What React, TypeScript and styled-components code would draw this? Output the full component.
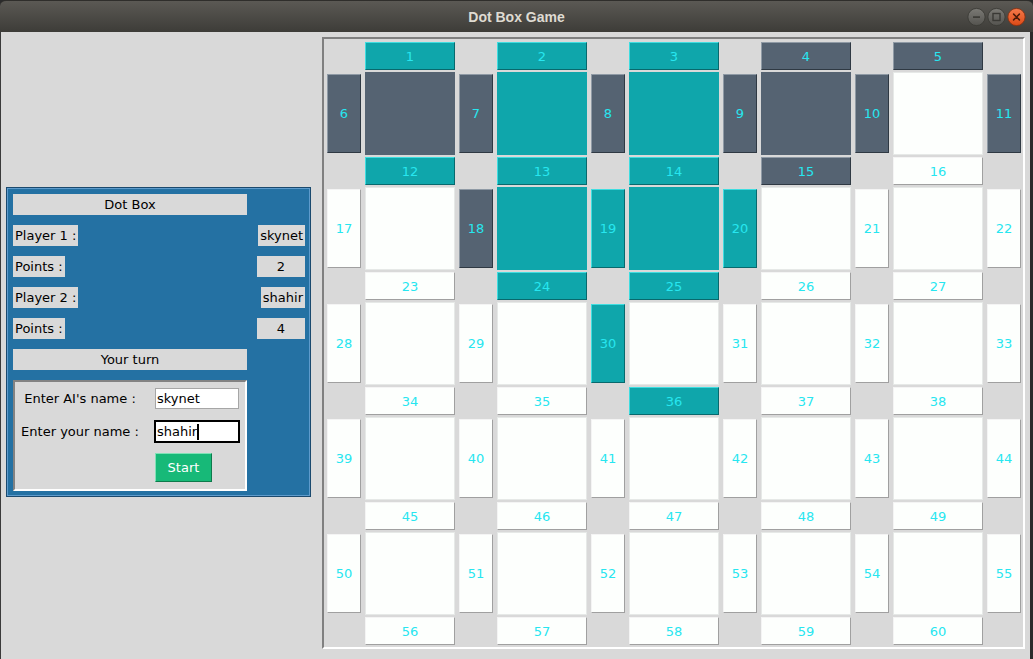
import React from "react";
import styled, { createGlobalStyle } from "styled-components";

type Owner = "n" | "a" | "y";

const colors: Record<Owner, { bg: string; light: string; dark: string; edge: string }> = {
  n: { bg: "#fdfffd", light: "#f4f4f4", dark: "#a0a0a0", edge: "#e6e9e7" },
  a: { bg: "#556372", light: "#8f9aa5", dark: "#2f3943", edge: "#556372" },
  y: { bg: "#0fa6ab", light: "#3fdde0", dark: "#08696d", edge: "#0fa6ab" },
};

// owners of every line and box, row by row
const HLINES = ["yyyaa", "yyyan", "nyynn", "nnynn", "nnnnn", "nnnnn"];
const VLINES = ["aaaaaa", "nayynn", "nnynnn", "nnnnnn", "nnnnnn"];
const BOXES = ["ayyan", "nyynn", "nnnnn", "nnnnn", "nnnnn"];

const Global = createGlobalStyle`
  html, body {
    margin: 0;
    padding: 0;
    background: #2b2b2b;
  }
  body {
    font-family: "DejaVu Sans", "Noto Sans", sans-serif;
    font-size: 13px;
  }
`;

const Window = styled.div`
  width: 1033px;
  height: 659px;
  display: flex;
  flex-direction: column;
  overflow: hidden;
`;

const TitleBar = styled.div`
  height: 32px;
  flex: none;
  display: grid;
  grid-template-columns: 1fr auto 1fr;
  align-items: center;
  border-radius: 6px 6px 0 0;
  border-top: 1px solid #2f2e2b;
  background: linear-gradient(#5b5954, #3d3c38);
  box-sizing: border-box;
  padding-top: 1px;
`;

const Title = styled.div`
  grid-column: 2;
  font-family: "Liberation Sans", Arial, sans-serif;
  font-weight: bold;
  font-size: 14px;
  color: #dfdbd2;
`;

const WinButtons = styled.div`
  grid-column: 3;
  justify-self: end;
  display: flex;
  gap: 1px;
  padding-right: 7px;
`;

const Body = styled.div`
  flex: 1;
  display: flex;
  background: #d9d9d9;
  border-left: 1px solid #3a3a3a;
  border-right: 3px solid #2b2b2b;
`;

const Side = styled.div`
  width: 321px;
  flex: none;
  box-sizing: border-box;
  padding: 155px 0 0 5px;
`;

const Panel = styled.div`
  width: 305px;
  height: 310px;
  box-sizing: border-box;
  background: #2471a3;
  border: 1px solid #1b4a6e;
  box-shadow: inset 0 0 0 1px #5e9bcc;
  padding: 6px 5px 5px 6px;
  display: grid;
  grid-template-columns: 234px 48px;
  grid-template-rows: repeat(6, 21px) 111px;
  column-gap: 10px;
  row-gap: 10px;
`;

const Tag = styled.div<{ $wide?: boolean; $value?: boolean; $fixed?: boolean }>`
  grid-column: ${(p) => (p.$value ? 2 : 1)};
  justify-self: ${(p) => (p.$wide || p.$fixed ? "stretch" : p.$value ? "end" : "start")};
  background: #d9d9d9;
  color: #000;
  height: 21px;
  line-height: 21px;
  padding: 0 2px;
  text-align: center;
  white-space: nowrap;
`;

const NameFrame = styled.div`
  grid-column: 1;
  box-sizing: border-box;
  border: 2px solid;
  border-color: #828282 #ffffff #ffffff #828282;
  background: #d9d9d9;
  padding: 5px 5px 7px 0;
  display: grid;
  grid-template-columns: 130px 86px;
  grid-template-rows: 23px 23px 29px;
  column-gap: 9px;
  row-gap: 10px;
  align-items: center;
`;

const Prompt = styled.div`
  justify-self: center;
  color: #000;
  white-space: nowrap;
`;

const Field = styled.div<{ $focused?: boolean }>`
  height: 23px;
  box-sizing: border-box;
  background: #fff;
  border: 1px solid ${(p) => (p.$focused ? "#000" : "#d9d9d9")};
  box-shadow: inset 0 0 0 1px ${(p) => (p.$focused ? "#000" : "#a6a6a6")};
  padding-left: 2px;
  line-height: 21px;
  color: #000;
  display: flex;
  align-items: center;
`;

const Caret = styled.span`
  display: inline-block;
  width: 2px;
  height: 16px;
  background: #000;
`;

const StartButton = styled.button`
  grid-column: 2;
  justify-self: start;
  margin-left: 1px;
  width: 57px;
  height: 29px;
  padding: 0;
  font-family: inherit;
  font-size: 13px;
  color: #fff;
  background: #17b978;
  border: 1px solid;
  border-color: #80e2b7 #0e7a4c #0e7a4c #80e2b7;
`;

const BoardFrame = styled.div`
  margin-top: 5px;
  align-self: flex-start;
  border: 2px solid;
  border-color: #808080 #ffffff #ffffff #808080;
  padding: 3px 2px 2px 3px;
`;

const Board = styled.div`
  display: grid;
  grid-template-columns: repeat(5, 34px 90px) 34px;
  grid-template-rows: repeat(5, 28px 83px) 28px;
  column-gap: 4px;
  row-gap: 2px;
`;

const Line = styled.button<{ $owner: Owner; $vertical?: boolean }>`
  padding: 0;
  margin: 0;
  font-family: inherit;
  font-size: 13px;
  color: #27e6f0;
  background: ${(p) => colors[p.$owner].bg};
  border: 1px solid;
  border-color: ${(p) => {
    const c = colors[p.$owner];
    return `${c.light} ${c.dark} ${c.dark} ${c.light}`;
  }};
  height: ${(p) => (p.$vertical ? "79px" : "28px")};
  align-self: center;
`;

const Box = styled.div<{ $owner: Owner }>`
  box-sizing: border-box;
  background: ${(p) => colors[p.$owner].bg};
  border: 1px solid ${(p) => colors[p.$owner].edge};
`;

const Dot = styled.div``;

function WinButton({ kind }: { kind: "min" | "max" | "close" }) {
  const close = kind === "close";
  return (
    <svg width="19" height="20" viewBox="0 0 19 20">
      <defs>
        <linearGradient id={`g-${kind}`} x1="0" y1="0" x2="0" y2="1">
          <stop offset="0" stopColor={close ? "#f57a4b" : "#7b7a75"} />
          <stop offset="1" stopColor={close ? "#dc4a16" : "#54534f"} />
        </linearGradient>
      </defs>
      <circle cx="9.5" cy="10" r="8.6" fill={`url(#g-${kind})`} stroke={close ? "#8f2e0c" : "#393834"} strokeWidth="0.8" />
      {kind === "min" && <rect x="6" y="9.3" width="7" height="1.6" fill="#3a3935" />}
      {kind === "max" && <rect x="6" y="6.5" width="7" height="7" fill="none" stroke="#3a3935" strokeWidth="1.4" />}
      {close && (
        <path d="M6.6 7.1 L12.4 12.9 M12.4 7.1 L6.6 12.9" stroke="#4a1a08" strokeWidth="1.5" strokeLinecap="round" />
      )}
    </svg>
  );
}

function GameBoard() {
  const cells: React.ReactNode[] = [];
  for (let r = 0; r < 11; r++) {
    const half = Math.floor(r / 2);
    for (let c = 0; c < 11; c++) {
      const k = Math.floor(c / 2);
      const key = `${r}-${c}`;
      if (r % 2 === 0) {
        if (c % 2 === 0) cells.push(<Dot key={key} />);
        else
          cells.push(
            <Line key={key} $owner={HLINES[half][k] as Owner}>
              {1 + half * 11 + k}
            </Line>
          );
      } else if (c % 2 === 0) {
        cells.push(
          <Line key={key} $vertical $owner={VLINES[half][k] as Owner}>
            {6 + half * 11 + k}
          </Line>
        );
      } else {
        cells.push(<Box key={key} $owner={BOXES[half][k] as Owner} />);
      }
    }
  }
  return <Board>{cells}</Board>;
}

export default function App() {
  return (
    <Window>
      <Global />
      <TitleBar>
        <Title>Dot Box Game</Title>
        <WinButtons>
          <WinButton kind="min" />
          <WinButton kind="max" />
          <WinButton kind="close" />
        </WinButtons>
      </TitleBar>
      <Body>
        <Side>
          <Panel>
            <Tag $wide>Dot Box</Tag>
            <Tag>Player 1 :</Tag>
            <Tag $value>skynet</Tag>
            <Tag>Points :</Tag>
            <Tag $value $fixed>2</Tag>
            <Tag>Player 2 :</Tag>
            <Tag $value>shahir</Tag>
            <Tag>Points :</Tag>
            <Tag $value $fixed>4</Tag>
            <Tag $wide>Your turn</Tag>
            <NameFrame>
              <Prompt>Enter AI's name :</Prompt>
              <Field>skynet</Field>
              <Prompt>Enter your name :</Prompt>
              <Field $focused>
                shahir
                <Caret />
              </Field>
              <StartButton>Start</StartButton>
            </NameFrame>
          </Panel>
        </Side>
        <BoardFrame>
          <GameBoard />
        </BoardFrame>
      </Body>
    </Window>
  );
}
